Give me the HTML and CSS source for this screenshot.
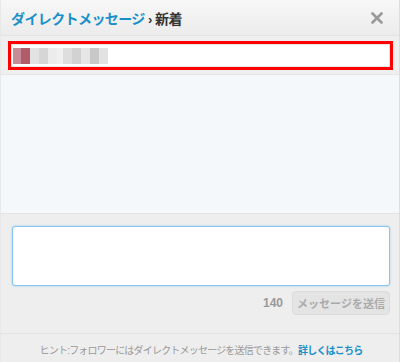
FILE: index.html
```html
<!DOCTYPE html>
<html lang="ja">

<head>
    <meta charset="UTF-8">
    <title>ダイレクトメッセージ</title>
    <link rel="stylesheet" href="styles.css">
</head>

<body>
    <div class="dm-dialog">
        <div class="dm-header">
            <h3 class="dm-title"><span class="dm-link">ダイレクトメッセージ</span> <span class="dm-sep">›</span> 新着</h3>
            <svg class="dm-close" width="12" height="12" viewBox="0 0 12 12">
                <path d="M1.5 1.5 L10.5 10.5 M10.5 1.5 L1.5 10.5" stroke="#999" stroke-width="2.6" stroke-linecap="round" />
            </svg>
        </div>
        <div class="dm-recipient">
            <div class="highlight">
                <div class="recipient-input">
                    <span class="blur b1"></span><span class="blur b2"></span><span class="blur b3"></span><span class="blur b4"></span><span class="blur b5"></span><span class="blur b6"></span><span class="blur b7"></span><span class="blur b8"></span><span class="blur b9"></span><span class="blur b10"></span><span class="blur b11"></span>
                </div>
            </div>
        </div>
        <div class="dm-list"></div>
        <div class="dm-compose">
            <div class="dm-textarea"></div>
            <div class="dm-actions">
                <span class="dm-count">140</span>
                <button class="dm-send">メッセージを送信</button>
            </div>
        </div>
        <div class="dm-footer">
            ヒント:フォロワーにはダイレクトメッセージを送信できます。<a href="#" class="dm-more">詳しくはこちら</a>
        </div>
    </div>
</body>

</html>
```

FILE: styles.css
```css
body {
    margin: 0;
    font-family: Arial, "Liberation Sans", "Noto Sans CJK JP", sans-serif;
    background: #fff;
}

.dm-dialog {
    width: 398px;
    height: 362px;
    border-right: 1px solid #ddd;
    border-left: 1px solid #e8e8e8;
    background: #eeeeee;
    display: flex;
    flex-direction: column;
}

.dm-header {
    height: 35px;
    flex-shrink: 0;
    display: flex;
    align-items: center;
    justify-content: space-between;
    padding: 0 16px 0 10px;
    background: linear-gradient(#f7f7f7, #ececec);
    border-bottom: 1px solid #e2e2e2;
}

.dm-title {
    margin: 0;
    font-size: 14px;
    font-weight: bold;
    color: #333;
    letter-spacing: -0.6px;
}

.dm-link {
    color: #1a8fc9;
}

.dm-sep {
    font-size: 13px;
}

.dm-close {
    display: block;
}

.dm-recipient {
    flex-shrink: 0;
    padding: 5px 6px 4px 7px;
    background: #efefef;
    border-bottom: 1px solid #e6e6e6;
}

.highlight {
    border: 3px solid #f00;
    padding: 1px;
    background: #e8e8e8;
}

.recipient-input {
    height: 21px;
    background: #fff;
    display: flex;
    align-items: center;
    padding-left: 1px;
}

.blur {
    display: inline-block;
    height: 16px;
    width: 9px;
    background: #ddd;
}

.b1 { background: #c88c98; width: 8px; }
.b2 { background: #b05a6a; }
.b3 { background: #e2e2e2; }
.b4 { background: #d6d6d6; }
.b5 { background: #ececec; }
.b6 { background: #f0f0f0; width: 6px; }
.b7 { background: #dedede; }
.b8 { background: #d2d2d2; }
.b9 { background: #e6e6e6; }
.b10 { background: #c8c8c8; }
.b11 { background: #e2e2e2; }

.dm-list {
    height: 138px;
    flex-shrink: 0;
    background: #f5f8fa;
    border-bottom: 1px solid #e4e4e4;
}

.dm-compose {
    flex-shrink: 0;
    padding: 12px 9px 0 11px;
    height: 107px;
    border-bottom: 1px solid #e2e2e2;
}

.dm-textarea {
    height: 58px;
    background: #fff;
    border: 1px solid #86c5f0;
    border-radius: 3px;
    box-shadow: 0 0 2px rgba(86, 180, 239, 0.6);
}

.dm-actions {
    display: flex;
    justify-content: flex-end;
    align-items: center;
    margin-top: 5px;
}

.dm-count {
    font-size: 12px;
    font-weight: bold;
    color: #999;
    margin-right: 9px;
}

.dm-send {
    height: 24px;
    width: 98px;
    padding: 0;
    font-family: inherit;
    font-size: 11px;
    font-weight: bold;
    color: #aaa;
    background: #e4e4e4;
    border: 1px solid #dcdcdc;
    border-radius: 4px;
}

.dm-footer {
    flex: 1;
    text-align: center;
    font-size: 10px;
    letter-spacing: -0.8px;
    color: #999;
    padding-top: 8px;
    padding-left: 2px;
    white-space: nowrap;
}

.dm-more {
    color: #1a8fc9;
    font-weight: bold;
    text-decoration: none;
}
```
